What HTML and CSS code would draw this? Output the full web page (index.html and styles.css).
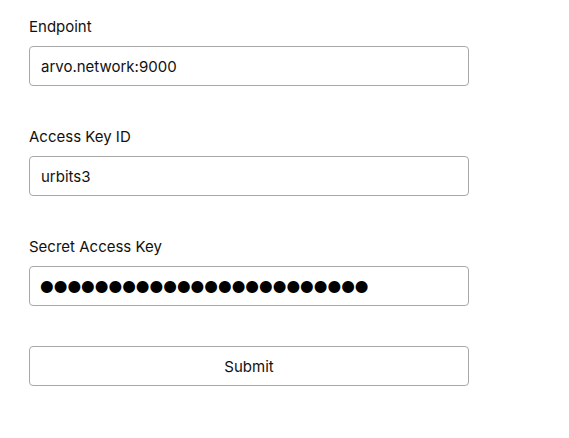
FILE: index.html
```html
<!DOCTYPE html>
<html>
<head>
<meta charset="utf-8">
<link rel="stylesheet" href="styles.css">
</head>
<body>
<form class="form">
  <div class="field">
    <label class="label" for="ep">Endpoint</label>
    <input class="input" id="ep" type="text" value="arvo.network:9000">
  </div>
  <div class="field">
    <label class="label" for="ak">Access Key ID</label>
    <input class="input" id="ak" type="text" value="urbits3">
  </div>
  <div class="field">
    <label class="label" for="sk">Secret Access Key</label>
    <input class="input input-secret" id="sk" type="text" value="●●●●●●●●●●●●●●●●●●●●●●●●">
  </div>
  <button class="button" type="button">Submit</button>
</form>
</body>
</html>
```
FILE: styles.css
```css
html, body {
  margin: 0;
  padding: 0;
  background: #fff;
}
body {
  font-family: Inter, "Noto Sans", sans-serif;
  color: #111;
}
.form {
  display: flex;
  flex-direction: column;
  gap: 40px;
  padding: 16px 0 0 29px;
  width: 440px;
}
.field {
  display: flex;
  flex-direction: column;
  gap: 9px;
}
.label {
  font-size: 15px;
  line-height: 21px;
  color: #111;
}
.input {
  box-sizing: border-box;
  width: 440px;
  height: 40px;
  border: 1px solid #a8a8a8;
  border-radius: 4px;
  padding: 0 11px;
  font-family: Inter, sans-serif;
  font-size: 15px;
  color: #111;
  outline: none;
  background: #fff;
}
.input-secret {
  font-family: "DejaVu Sans", sans-serif;
  font-size: 15.7px;
  color: #000;
  padding-left: 10px;
  padding-bottom: 2px;
}
.button {
  box-sizing: border-box;
  width: 440px;
  height: 40px;
  border: 1px solid #a8a8a8;
  border-radius: 4px;
  background: #fff;
  font-family: Inter, sans-serif;
  font-size: 15px;
  color: #111;
}
```
